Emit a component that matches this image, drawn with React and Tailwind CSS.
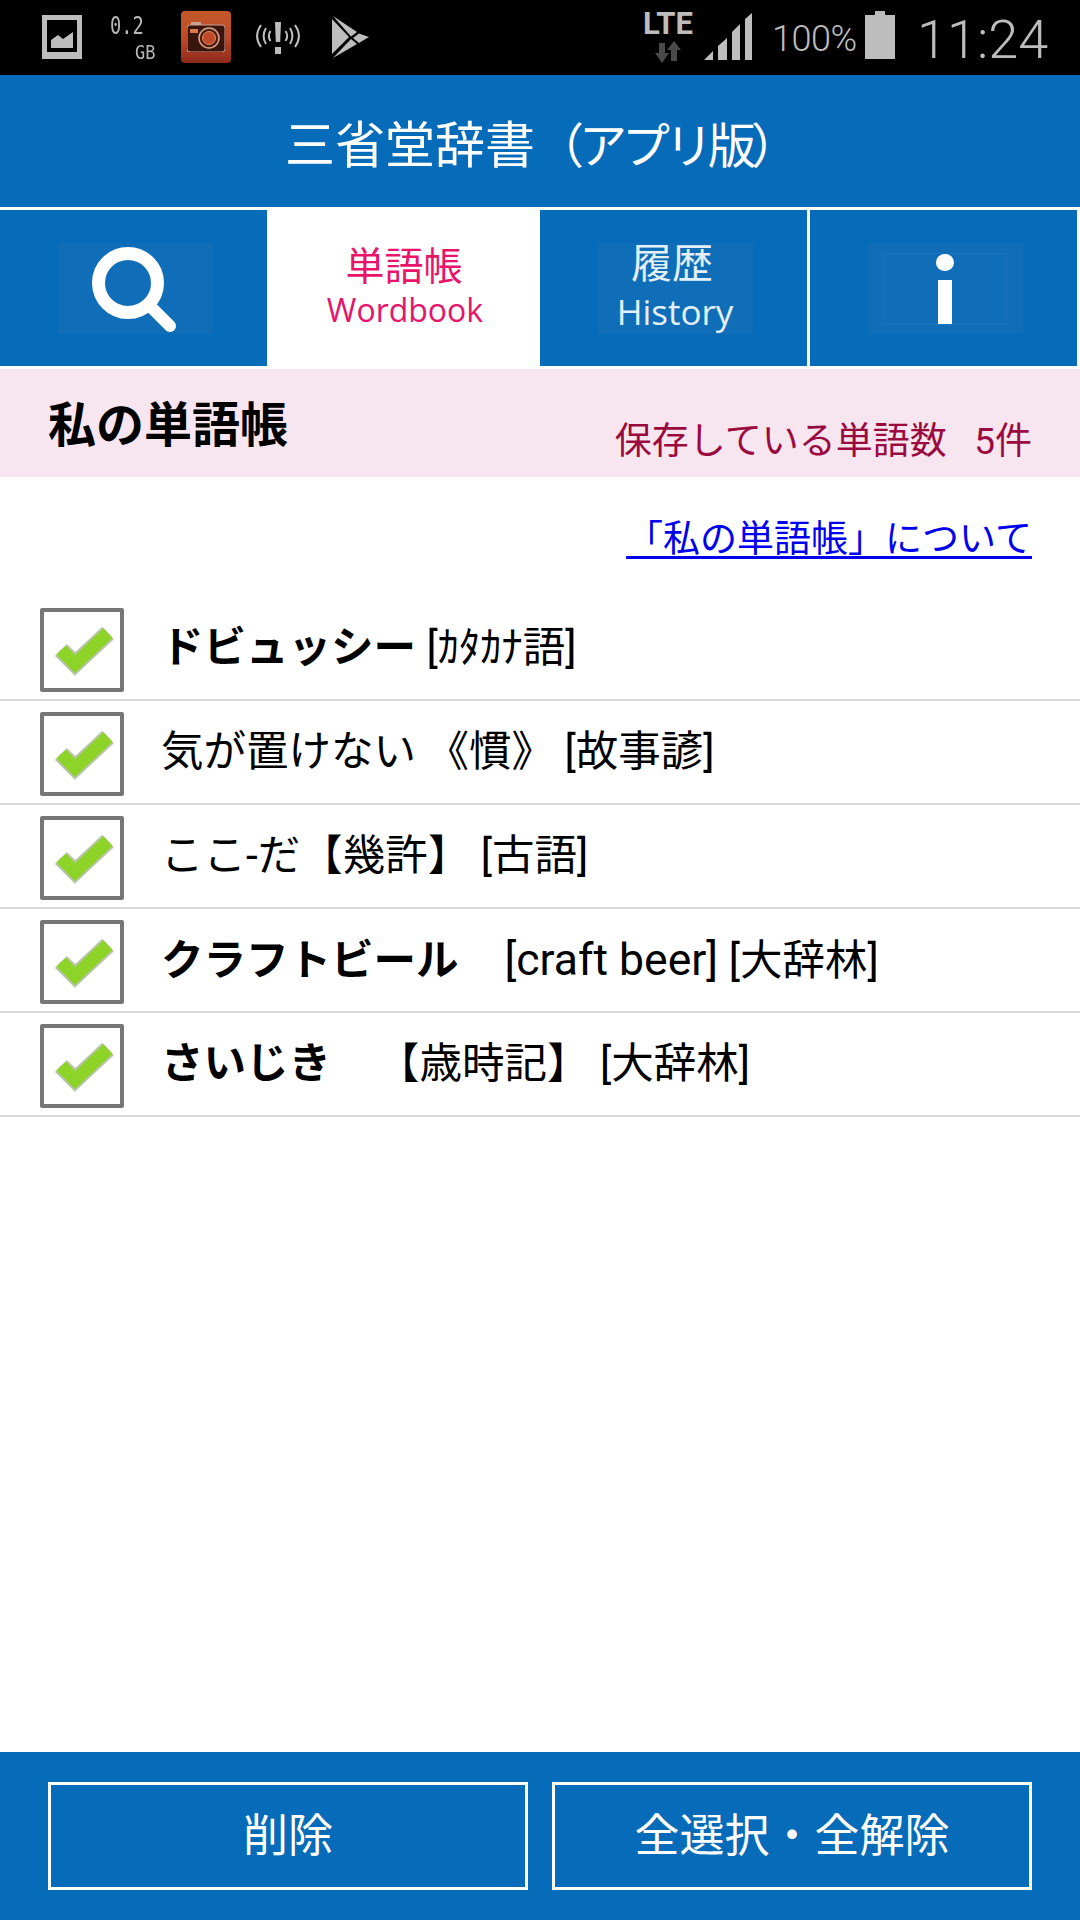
const font = { fontFamily: 'Roboto, "Noto Sans CJK JP", sans-serif' };

const rows = [
  { bold: "ドビュッシー", rest: " [ｶﾀｶﾅ語]" },
  { bold: "", rest: "気が置けない 《慣》 [故事諺]" },
  { bold: "", rest: "ここ-だ【幾許】 [古語]" },
  { bold: "クラフトビール", lead: "[craft beer]", leadClass: "text-[44.500px] ml-[46px]", rest: " [大辞林]" },
  { bold: "さいじき", lead: "【歳時記】", leadClass: "ml-[46px]", rest: " [大辞林]" },
];

function StatusLeft() {
  return (
    <div className="flex items-start">
      {/* picture icon */}
      <svg width="40" height="44" viewBox="0 0 40 44" className="ml-[42px] mt-[15px]">
        <path fill="#bdbdbd" fillRule="evenodd" d="M0 0h40v44H0zM5 5v32h30V5z" />
        <path fill="#bdbdbd" d="M9 33V25l7-5 5 4 10-7v16z" />
      </svg>
      <div className="w-[46px] ml-[28px] text-[#b8b8b8] font-['DejaVu_Sans_Mono',monospace]">
        <div className="text-[24px] leading-none mt-[14px] scale-x-[0.78] origin-left">0.2</div>
        <div className="text-[20px] leading-none mt-[4px] ml-[25px] scale-x-[0.85] origin-left">GB</div>
      </div>
      {/* camera notification */}
      <div className="w-[50px] h-[52px] ml-[25px] mt-[11px] rounded-[4px] bg-gradient-to-b from-[#c2592a] via-[#c04a28] to-[#8e2a1c] flex items-center justify-center">
        <svg width="38" height="30" viewBox="0 0 38 30">
          <rect x="0" y="3" width="38" height="27" rx="3" fill="#3a150e" stroke="#c9a190" strokeWidth="1" />
          <rect x="4" y="0" width="10" height="3" fill="#c9a190" />
          <rect x="3" y="7" width="8" height="4" fill="#d77a4f" />
          <circle cx="22" cy="16" r="10" fill="#4f1d12" stroke="#d9a48a" strokeWidth="1.5" />
          <circle cx="22" cy="16" r="6.5" fill="#c0492a" stroke="#e08a60" strokeWidth="1" />
        </svg>
      </div>
      {/* vibrate / alert */}
      <svg width="44" height="32" viewBox="0 0 44 32" className="ml-[25px] mt-[22px]" fill="none" stroke="#bdbdbd" strokeWidth="2">
        <path d="M5 3c-5 7-5 15 0 22M10 6c-3 5-3 11 0 16M14.500 9c-2 3-2 7 0 10M39 3c5 7 5 15 0 22M34 6c3 5 3 11 0 16M29.500 9c2 3 2 7 0 10" />
        <path fill="#bdbdbd" stroke="none" d="M19 0h6l-.8 20h-4.400zM19 25h6v7h-6z" />
      </svg>
      {/* play store */}
      <svg width="38" height="42" viewBox="0 0 38 42" className="ml-[32px] mt-[16px]" fill="#bdbdbd">
        <path d="M1 0l24 16-6 4.500z" />
        <path d="M0 3l17 18L0 38z" />
        <path d="M1 42l18-19 6 5z" />
        <path d="M27 17.500l10 3.500-10 6-6-5z" />
      </svg>
    </div>
  );
}

function StatusRight() {
  return (
    <div className="flex items-start text-[#bdbdbd] font-['Roboto',sans-serif]">
      <div className="w-[50px] flex flex-col items-center">
        <div className="text-[31px] leading-none font-bold mt-[8px]">LTE</div>
        <svg width="28" height="22" viewBox="0 0 28 22" className="mt-[2px]">
          <path fill="#4a4a4a" d="M5 2h6v10h4l-7 10-7-10h4z" />
          <path fill="#4a4a4a" d="M23 20h-6V9h-4l7-9 7 9h-4z" />
        </svg>
      </div>
      <svg width="48" height="47" viewBox="0 0 48 47" className="ml-[11px] mt-[13px]" fill="#bdbdbd">
        <path d="M0 47l9-9v9zM14 47V33l9-8v22zM28 47V19l8-8v36zM41 47V6l7-6v47z" />
      </svg>
      <div className="text-[36px] leading-none font-light ml-[20px] mt-[21px] w-[84px] tracking-[-0.5px]">100%</div>
      <svg width="30" height="48" viewBox="0 0 30 48" className="ml-[9px] mt-[11px]" fill="#bdbdbd">
        <path d="M10 0h10v4h10v44H0V4h10z" />
      </svg>
      <div className="text-[54px] leading-none font-light ml-[22px] mt-[13px] w-[128px]">11:24</div>
    </div>
  );
}

function Check() {
  return (
    <div className="w-[84px] h-[84px] mt-[4px] border-[4px] border-[#777777] rounded-[2px] bg-white shrink-0 blur-[0.4px]">
      <svg width="76" height="76" viewBox="0 0 76 76" fill="none">
        <path d="M17 38L31 52 64 21" stroke="#b9c4a8" strokeWidth="17" />
        <path d="M17 38L31 52 64 21" stroke="#8ed428" strokeWidth="13" />
      </svg>
    </div>
  );
}

function TabBox({ children }) {
  return <div className="w-[155px] h-[91px] bg-[#0f6eb7] flex flex-col items-center">{children}</div>;
}

export default function App() {
  return (
    <div className="w-[1080px] h-[1920px] flex flex-col bg-white overflow-hidden" style={font}>
      <div className="h-[75px] bg-black flex justify-between pr-[35px]">
        <StatusLeft />
        <StatusRight />
      </div>

      <div className="h-[132px] bg-[#066bb8] flex items-center pl-[285px]">
        <span className="text-[50px] leading-none text-white mt-[9px]">
          三省堂辞書<span className="text-[48px] tracking-[-5px] ml-[1px]">（アプリ版）</span>
        </span>
      </div>

      {/* tabs */}
      <div className="h-[156px] mt-[3px] flex gap-[3px] pr-[3px]">
        <div className="w-[267px] bg-[#066bb8] flex items-center justify-center pl-[3px]">
          <TabBox>
            <svg width="155" height="91" viewBox="0 0 155 91" fill="none" stroke="white">
              <circle cx="70" cy="40" r="29.500" strokeWidth="13" />
              <path d="M94 65l18 18" strokeWidth="12" strokeLinecap="round" />
            </svg>
          </TabBox>
        </div>
        <div className="w-[267px] pl-[3px] bg-white flex flex-col items-center text-[#e8146a]">
          <div className="text-[39px] leading-none mt-[38px] mr-[2px]">単語帳</div>
          <div className="text-[32px] leading-none mt-[7px] font-['Open_Sans',sans-serif]">Wordbook</div>
        </div>
        <div className="w-[267px] bg-[#066bb8] flex items-center justify-center pl-[3px]">
          <TabBox>
            <div className="text-[41px] leading-none text-[#e4eff8] mt-[1px] mr-[6px]">履歴</div>
            <div className="text-[35px] leading-none text-[#e4eff8] mt-[9px] font-['Open_Sans',sans-serif]">History</div>
          </TabBox>
        </div>
        <div className="w-[267px] bg-[#066bb8] flex items-center justify-center pl-[3px]">
          <TabBox>
            <div className="w-[123px] h-[72px] mt-[10px] border border-[#1a74bb] flex flex-col items-center">
              <div className="w-[18px] h-[18px] rounded-full bg-white" />
              <div className="w-[14px] h-[46px] bg-white mt-[9px]" />
            </div>
          </TabBox>
        </div>
      </div>

      {/* heading */}
      <div className="h-[108px] mt-[3px] bg-[#f7e6ef] flex justify-between pl-[48px] pr-[48px]">
        <div className="text-[48px] leading-none font-bold text-black mt-[33px]">私の単語帳</div>
        <div className="text-[37px] leading-none text-[#9b0a3f] mt-[54px] whitespace-pre">保存している単語数   5件</div>
      </div>

      <div className="flex justify-end pr-[48px] mt-[44px]">
        <a className="text-[37px] leading-[37px] text-[#0000ee] underline underline-offset-[4px]">「私の単語帳」について</a>
      </div>

      {/* word list */}
      <div className="mt-[39px]">
        {rows.map((row, i) => (
          <div key={i} className="h-[104px] border-b-2 border-[#d8d8d8] flex items-center pl-[40px]">
            <Check />
            <div className="ml-[37px] text-[42.500px] leading-none text-black whitespace-pre">
              {row.bold && <b>{row.bold}</b>}
              {row.lead && <span className={row.leadClass}>{row.lead}</span>}
              {row.rest}
            </div>
          </div>
        ))}
      </div>

      <div className="mt-auto h-[168px] bg-[#066bb8] flex justify-center items-center gap-[24px]">
        <button className="w-[480px] h-[108px] border-[3px] border-white text-white text-[45px] pt-[2px]">削除</button>
        <button className="w-[480px] h-[108px] border-[3px] border-white text-white text-[45px] pt-[2px]">全選択・全解除</button>
      </div>
    </div>
  );
}
